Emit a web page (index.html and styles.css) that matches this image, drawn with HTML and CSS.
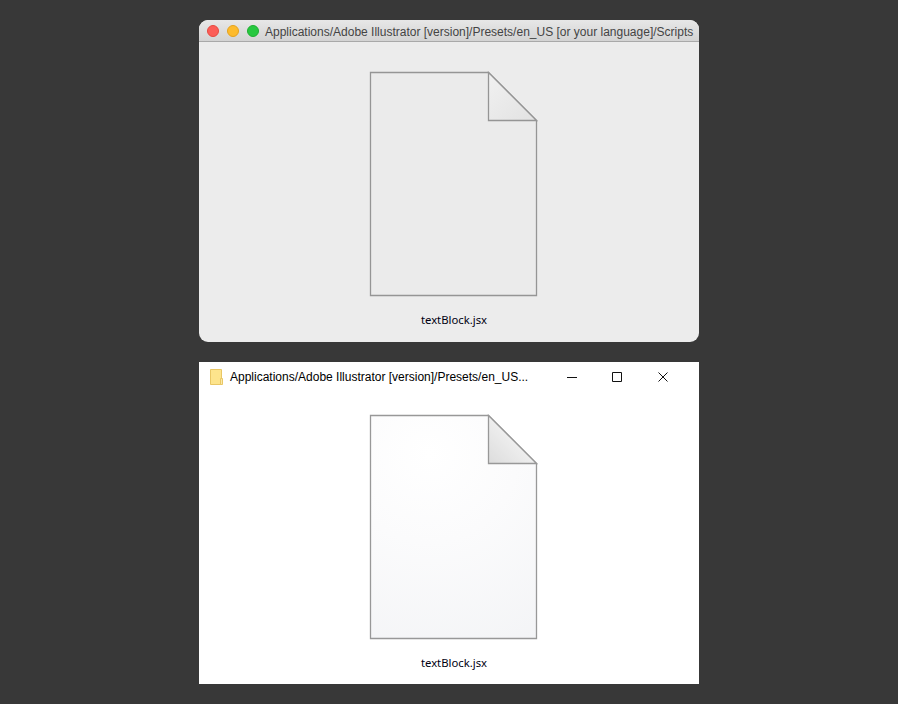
FILE: index.html
```html
<!DOCTYPE html>
<html lang="en">
<head>
<meta charset="UTF-8">
<meta name="viewport" content="width=device-width, initial-scale=1.0">
<title>Scripts folder</title>
<link rel="stylesheet" href="styles.css">
</head>
<body>
<div class="window mac">
    <div class="mac-bar">
        <span class="light red"></span>
        <span class="light yellow"></span>
        <span class="light green"></span>
        <span class="mac-title">Applications/Adobe Illustrator [version]/Presets/en_US [or your language]/Scripts</span>
    </div>
    <div class="content">
        <svg class="file" width="169" height="226" viewBox="0 0 169 226">
            <defs>
                <linearGradient id="macfold" x1="0" y1="0" x2="1" y2="1">
                    <stop offset="0" stop-color="#f1f1f1"/>
                    <stop offset="1" stop-color="#e2e2e2"/>
                </linearGradient>
            </defs>
            <path d="M1.5 1.5H119.5L167.5 49.5V224.5H1.5Z" fill="#ebebeb" stroke="#959595" stroke-width="1.3"/>
            <path d="M119.5 1.5V49.5H167.5Z" fill="url(#macfold)" stroke="#959595" stroke-width="1.3"/>
        </svg>
        <div class="filename">textBlock.jsx</div>
    </div>
</div>
<div class="window win">
    <div class="win-bar">
        <svg class="folder" width="13" height="16" viewBox="0 0 13 16">
            <path d="M.5.5H11.5V15.5H.5Z" fill="#fde48c" stroke="#e9c765"/>
            <path d="M10.5 9.5H12.5V15.5H10.5Z" fill="#fbe9a8" stroke="#e9c765"/>
        </svg>
        <span class="win-title">Applications/Adobe Illustrator [version]/Presets/en_US...</span>
        <div class="win-controls">
            <svg width="10" height="10" viewBox="0 0 10 10"><path d="M0 5.5H10" stroke="#111"/></svg>
            <svg width="10" height="10" viewBox="0 0 10 10"><path d="M.5.5H9.5V9.5H.5Z" fill="none" stroke="#111"/></svg>
            <svg class="win-close" width="10" height="10" viewBox="0 0 10 10"><path d="M.5.5L9.5 9.5M9.5.5L.5 9.5" stroke="#111"/></svg>
        </div>
    </div>
    <div class="content">
        <svg class="file" width="169" height="226" viewBox="0 0 169 226">
            <defs>
                <radialGradient id="page" gradientUnits="userSpaceOnUse" cx="60" cy="40" r="220">
                    <stop offset="0" stop-color="#ffffff"/>
                    <stop offset=".4" stop-color="#fbfbfc"/>
                    <stop offset="1" stop-color="#f3f4f6"/>
                </radialGradient>
                <linearGradient id="winfold" x1="0" y1="1" x2="1" y2="0">
                    <stop offset="0" stop-color="#dcdcdc"/>
                    <stop offset=".55" stop-color="#f0f0f0"/>
                    <stop offset="1" stop-color="#e6e6e6"/>
                </linearGradient>
            </defs>
            <path d="M1.5 1.5H119.5L167.5 49.5V224.5H1.5Z" fill="url(#page)" stroke="#989898" stroke-width="1.3"/>
            <path d="M119.5 1.5V49.5H167.5Z" fill="url(#winfold)" stroke="#989898" stroke-width="1.3"/>
        </svg>
        <div class="filename">textBlock.jsx</div>
    </div>
</div>
</body>
</html>
```

FILE: styles.css
```css
html, body {
    margin: 0;
    padding: 0;
}
body {
    background-color: #383838;
    height: 704px;
    box-sizing: border-box;
    padding-top: 20px;
    display: flex;
    flex-direction: column;
    align-items: center;
    gap: 20px;
    overflow: hidden;
}
.window {
    width: 500px;
    height: 322px;
    display: flex;
    flex-direction: column;
    overflow: hidden;
}
.mac {
    background-color: #ececec;
    border-radius: 9px;
}
.win {
    background-color: #ffffff;
}
.mac-bar {
    height: 21px;
    flex-shrink: 0;
    display: flex;
    align-items: center;
    padding-left: 8px;
    gap: 8px;
    background: linear-gradient(#e7e7e7, #d3d3d3);
    border-bottom: 1px solid #a9a9a9;
}
.light {
    width: 12px;
    height: 12px;
    border-radius: 50%;
    box-sizing: border-box;
}
.red {
    background-color: #fc5d57;
    border: 1px solid #e5493f;
}
.yellow {
    background-color: #fdbb2d;
    border: 1px solid #e4a21e;
}
.green {
    background-color: #27c840;
    border: 1px solid #1fae31;
}
.mac-title {
    font-family: "Liberation Sans", Arial, sans-serif;
    font-size: 12px;
    color: #444444;
    white-space: nowrap;
    margin-left: -2px;
    padding-top: 2px;
}
.win-bar {
    height: 30px;
    flex-shrink: 0;
    display: flex;
    align-items: center;
    padding-left: 11px;
}
.folder {
    flex-shrink: 0;
}
.win-title {
    font-family: "Liberation Sans", Arial, sans-serif;
    font-size: 12px;
    color: #000000;
    white-space: nowrap;
    margin-left: 7px;
}
.win-controls {
    margin-left: auto;
    margin-right: 31px;
    display: flex;
    gap: 35px;
}
.win-close {
    margin-left: 1px;
}
.content {
    flex: 1;
    display: flex;
    flex-direction: column;
    align-items: center;
}
.mac .content {
    padding-top: 29px;
}
.win .content {
    padding-top: 22px;
}
.file {
    display: block;
    margin-left: 9px;
}
.filename {
    font-family: "Noto Sans", "Open Sans", sans-serif;
    font-size: 11.3px;
    line-height: 16px;
    color: #000011;
    margin-top: 15px;
    padding-left: 10px;
}
```
